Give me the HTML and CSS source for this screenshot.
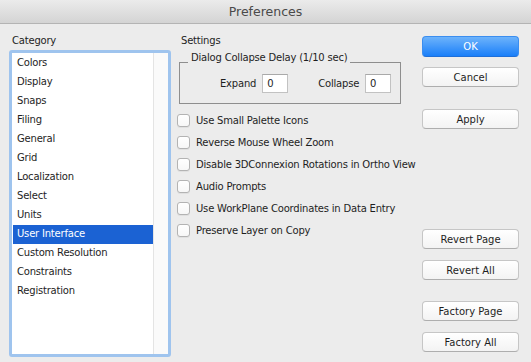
FILE: index.html
```html
<!DOCTYPE html>
<html lang="en">
<head>
    <meta charset="UTF-8">
    <title>Preferences</title>
    <link rel="stylesheet" href="styles.css">
</head>
<body>
    <div class="titlebar">Preferences</div>

    <div class="content">
        <div class="col-category">
            <div class="caption">Category</div>
            <div class="listbox">
                <ul class="items">
                    <li>Colors</li>
                    <li>Display</li>
                    <li>Snaps</li>
                    <li>Filing</li>
                    <li>General</li>
                    <li>Grid</li>
                    <li>Localization</li>
                    <li>Select</li>
                    <li>Units</li>
                    <li class="selected">User Interface</li>
                    <li>Custom Resolution</li>
                    <li>Constraints</li>
                    <li>Registration</li>
                </ul>
                <div class="scroll-track"></div>
            </div>
        </div>

        <div class="col-settings">
            <div class="caption">Settings</div>
            <fieldset class="group">
                <legend>Dialog Collapse Delay (1/10 sec)</legend>
                <div class="delay-row">
                    <label>Expand <input type="text" value="0"></label>
                    <label>Collapse <input type="text" value="0"></label>
                </div>
            </fieldset>

            <div class="checks">
                <label class="check"><span class="box"></span>Use Small Palette Icons</label>
                <label class="check"><span class="box"></span>Reverse Mouse Wheel Zoom</label>
                <label class="check"><span class="box"></span>Disable 3DConnexion Rotations in Ortho View</label>
                <label class="check"><span class="box"></span>Audio Prompts</label>
                <label class="check"><span class="box"></span>Use WorkPlane Coordinates in Data Entry</label>
                <label class="check"><span class="box"></span>Preserve Layer on Copy</label>
            </div>
        </div>

        <div class="col-buttons">
            <button class="btn primary">OK</button>
            <button class="btn btn-cancel">Cancel</button>
            <button class="btn btn-apply">Apply</button>
            <button class="btn btn-revert">Revert Page</button>
            <button class="btn btn-near">Revert All</button>
            <button class="btn btn-factory">Factory Page</button>
            <button class="btn btn-near">Factory All</button>
        </div>
    </div>
</body>
</html>
```

FILE: styles.css
```css
* {
    margin: 0;
    padding: 0;
    box-sizing: border-box;
}

body {
    width: 531px;
    height: 362px;
    overflow: hidden;
    background: #ececec;
    font-family: "DejaVu Sans", sans-serif;
    font-size: 10px;
    letter-spacing: -0.2px;
    color: #1e1e1e;
}

.titlebar {
    height: 24px;
    line-height: 23px;
    text-align: center;
    font-size: 12.5px;
    letter-spacing: 0;
    color: #4a4a4a;
    background: linear-gradient(#ebebeb, #d4d4d4);
    border-bottom: 1px solid #b4b4b4;
}

.content {
    display: flex;
    padding-left: 9px;
}

.caption {
    height: 17px;
    line-height: 16px;
    margin-top: 9px;
    padding-left: 3px;
}

/* Category list */
.col-category {
    width: 162px;
}

.listbox {
    display: flex;
    height: 307px;
    border: 3px solid #9fc4ee;
    border-radius: 3px;
    background: #fff;
}

.items {
    list-style: none;
    flex: 1;
    padding-top: 1px;
}

.items li {
    height: 19px;
    line-height: 17px;
    padding-left: 4px;
    margin-left: 1px;
}

.items li.selected {
    background: #1b62d3;
    color: #fff;
}

.scroll-track {
    width: 15px;
    background: #fafafa;
    border-left: 1px solid #e4e4e4;
}

/* Settings */
.col-settings {
    width: 244px;
    margin-left: 6px;
    white-space: nowrap;
}

.col-settings .caption {
    padding-left: 4px;
}

.group {
    width: 222px;
    height: 53px;
    margin: 1px 0 0 2px;
    border: 1px solid #8e8e8e;
    padding: 0;
}

.group legend {
    margin-left: 8px;
    padding: 0 3px 9px;
    line-height: 13px;
}

.delay-row {
    display: flex;
    gap: 30px;
    padding: 1px 0 0 40px;
}

.delay-row label {
    display: flex;
    align-items: center;
    gap: 6px;
}

.delay-row input {
    width: 26px;
    height: 19px;
    border: 1px solid #c2c2c2;
    border-top-color: #a9a9a9;
    background: #fff;
    font: inherit;
    padding-left: 4px;
    color: #1e1e1e;
}

.checks {
    margin-top: 5px;
}

.check {
    display: flex;
    align-items: center;
    height: 22px;
}

.box {
    width: 13px;
    height: 13px;
    margin-right: 6px;
    border: 1px solid #b3b3b3;
    border-radius: 3px;
    background: linear-gradient(#fff, #f7f7f7);
    box-shadow: 0 1px 0 rgba(0, 0, 0, 0.05);
}

/* Buttons */
.col-buttons {
    display: flex;
    flex-direction: column;
    margin-left: 1px;
}

.btn {
    width: 97px;
    height: 20px;
    font: inherit;
    color: #1e1e1e;
    background: linear-gradient(#ffffff, #f3f3f3);
    border: 1px solid #c6c6c6;
    border-bottom-color: #aeaeae;
    border-radius: 4px;
}

.btn.primary {
    height: 21px;
    margin-top: 12px;
    color: #fff;
    background: linear-gradient(#6db3fb, #1a7ff9);
    border: 1px solid #3b8ef0;
    border-bottom-color: #1f6fd8;
}

.btn-cancel { margin-top: 10px; }
.btn-apply { margin-top: 22px; }
.btn-revert { margin-top: 100px; }
.btn-near { margin-top: 11px; }
.btn-factory { margin-top: 21px; }
```
